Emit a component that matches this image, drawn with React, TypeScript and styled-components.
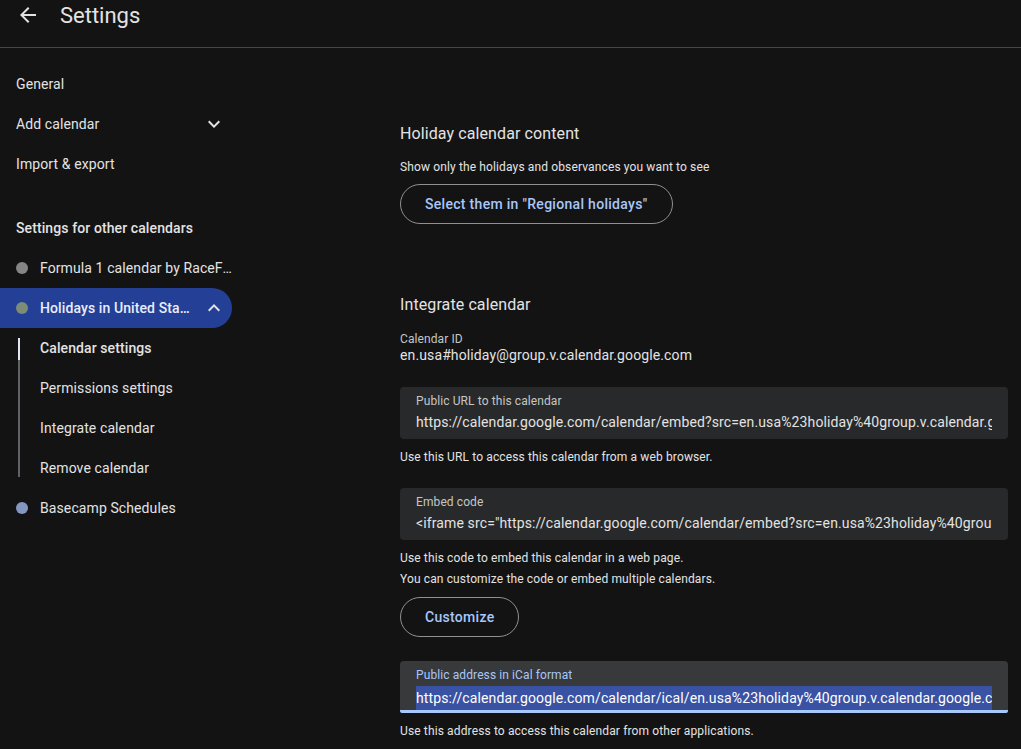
import React from 'react'
import styled, { createGlobalStyle } from 'styled-components'

const GlobalStyle = createGlobalStyle`
  body {
    margin: 0;
    background: #131314;
    font-family: Roboto, 'Noto Sans', Arial, sans-serif;
    color: #e3e3e3;
  }
`

const Page = styled.div`
  height: 100vh;
  overflow: hidden;
  display: flex;
  flex-direction: column;
`

const Header = styled.header`
  height: 48px;
  box-sizing: border-box;
  padding: 0 0 17px 16px;
  display: flex;
  align-items: center;
  gap: 20px;
  border-bottom: 1px solid #444746;
  flex-shrink: 0;
`

const Title = styled.h1`
  margin: 0;
  font-size: 22px;
  font-weight: 400;
  color: #e3e3e3;
`

const Body = styled.div`
  display: flex;
  flex: 1;
  min-height: 0;
`

const Sidebar = styled.nav`
  width: 256px;
  flex-shrink: 0;
  padding-top: 16px;
`

const Row = styled.div<{ $active?: boolean; $bold?: boolean }>`
  width: 232px;
  height: 40px;
  box-sizing: border-box;
  display: flex;
  align-items: center;
  padding: 0 ${p => (p.$active ? '6px' : '0')} 0 16px;
  gap: 8px;
  font-size: 14px;
  letter-spacing: 0.1px;
  font-weight: ${p => (p.$bold || p.$active ? 500 : 400)};
  color: ${p => (p.$active ? '#e8eefc' : '#e3e3e3')};
  background: ${p => (p.$active ? '#243f96' : 'transparent')};
  border-radius: 0 20px 20px 0;
`

const RowLabel = styled.span`
  flex: 1;
  min-width: 0;
  white-space: nowrap;
  overflow: hidden;
  text-overflow: ellipsis;
`

const SectionTitle = styled(Row)`
  margin-top: 24px;
  font-weight: 500;
`

const Dot = styled.span<{ $color: string }>`
  width: 12px;
  height: 12px;
  border-radius: 50%;
  background: ${p => p.$color};
  flex-shrink: 0;
  margin-right: 4px;
`

const SubList = styled.div`
  position: relative;
  &::before {
    content: '';
    position: absolute;
    left: 18px;
    top: 10px;
    bottom: 11px;
    width: 2px;
    background: #5f6368;
  }
`

const SubItem = styled.div<{ $active?: boolean }>`
  position: relative;
  height: 40px;
  display: flex;
  align-items: center;
  padding-left: 40px;
  font-size: 14px;
  letter-spacing: 0.1px;
  font-weight: ${p => (p.$active ? 500 : 400)};
  color: #e3e3e3;
  &::before {
    content: '';
    display: ${p => (p.$active ? 'block' : 'none')};
    position: absolute;
    left: 18px;
    top: 10px;
    height: 22px;
    width: 2px;
    background: #dfe6f5;
  }
`

const Main = styled.main`
  flex: 1;
  min-width: 0;
  padding: 74px 13px 0 144px;
`

const Section = styled.section`
  & + & {
    margin-top: 69px;
  }
`

const Heading = styled.h2`
  margin: 0;
  font-size: 16px;
  line-height: 24px;
  font-weight: 400;
  letter-spacing: 0.1px;
  color: #e3e3e3;
`

const Desc = styled.p`
  margin: 13px 0 0;
  font-size: 12px;
  line-height: 16px;
  letter-spacing: 0.13px;
  color: #e3e3e3;
`

const OutlineButton = styled.button<{ $top?: number }>`
  margin-top: ${p => p.$top ?? 9}px;
  height: 40px;
  padding: 0 24px;
  border: 1px solid #8e918f;
  border-radius: 20px;
  background: transparent;
  color: #a8c7fa;
  font-family: inherit;
  font-size: 14px;
  font-weight: 500;
  letter-spacing: 0.3px;
`

const IdLabel = styled.div`
  margin-top: 15px;
  font-size: 12px;
  line-height: 14px;
  letter-spacing: 0.1px;
  color: #c4c7c5;
`

const IdValue = styled.div`
  font-size: 14px;
  line-height: 18px;
  letter-spacing: 0.12px;
  color: #e3e3e3;
`

const Field = styled.div<{ $focused?: boolean; $top?: number }>`
  margin-top: ${p => p.$top ?? 23}px;
  box-sizing: border-box;
  height: 52px;
  padding: 6px 16px 0;
  overflow: hidden;
  background: ${p => (p.$focused ? '#37393b' : '#28292a')};
  border-radius: 4px 4px ${p => (p.$focused ? '2px 2px' : '4px 4px')};
  border-bottom: ${p => (p.$focused ? '3px solid #a8c7fa' : 'none')};
`

const FieldLabel = styled.div<{ $focused?: boolean }>`
  font-size: 12px;
  line-height: 16px;
  letter-spacing: 0.1px;
  color: ${p => (p.$focused ? '#a8c7fa' : '#c4c7c5')};
`

const FieldValue = styled.div`
  margin-top: 3px;
  font-size: 14px;
  line-height: 20px;
  letter-spacing: 0.12px;
  color: #e3e3e3;
  white-space: nowrap;
  overflow: hidden;
`

const Selected = styled.span`
  background: #3a52a3;
  color: #fff;
  display: inline-block;
  padding: 2px 0;
`

const Helper = styled.div<{ $gap?: number }>`
  margin-top: ${p => p.$gap ?? 10}px;
  font-size: 12px;
  line-height: 16px;
  letter-spacing: 0.13px;
  color: #e3e3e3;
`

const Icon = ({ d, size = 24 }: { d: string; size?: number }) => (
  <svg width={size} height={size} viewBox="0 0 24 24" fill="#e3e3e3" style={{ flexShrink: 0 }}>
    <path d={d} />
  </svg>
)

const ARROW_BACK = 'M20 11H7.83l5.59-5.59L12 4l-8 8 8 8 1.41-1.41L7.83 13H20v-2z'
const EXPAND_MORE = 'M16.59 8.59L12 13.17 7.41 8.59 6 10l6 6 6-6z'
const EXPAND_LESS = 'M12 8l-6 6 1.41 1.41L12 10.83l4.59 4.58L18 14z'

const App = () => {
  return (
    <Page>
      <GlobalStyle />
      <Header>
        <Icon d={ARROW_BACK} />
        <Title>Settings</Title>
      </Header>
      <Body>
        <Sidebar>
          <Row><RowLabel>General</RowLabel></Row>
          <Row style={{ paddingRight: 6 }}>
            <RowLabel>Add calendar</RowLabel>
            <Icon d={EXPAND_MORE} />
          </Row>
          <Row><RowLabel>Import &amp; export</RowLabel></Row>
          <SectionTitle as="div">Settings for other calendars</SectionTitle>
          <Row>
            <Dot $color="#858585" />
            <RowLabel>Formula 1 calendar by RaceFans</RowLabel>
          </Row>
          <Row $active>
            <Dot $color="#7c8c76" />
            <RowLabel>Holidays in United States</RowLabel>
            <Icon d={EXPAND_LESS} />
          </Row>
          <SubList>
            <SubItem $active>Calendar settings</SubItem>
            <SubItem>Permissions settings</SubItem>
            <SubItem>Integrate calendar</SubItem>
            <SubItem>Remove calendar</SubItem>
          </SubList>
          <Row>
            <Dot $color="#8497c2" />
            <RowLabel>Basecamp Schedules</RowLabel>
          </Row>
        </Sidebar>
        <Main>
          <Section>
            <Heading>Holiday calendar content</Heading>
            <Desc>Show only the holidays and observances you want to see</Desc>
            <OutlineButton>Select them in "Regional holidays"</OutlineButton>
          </Section>
          <Section>
            <Heading>Integrate calendar</Heading>
            <IdLabel>Calendar ID</IdLabel>
            <IdValue>en.usa#holiday@group.v.calendar.google.com</IdValue>

            <Field>
              <FieldLabel>Public URL to this calendar</FieldLabel>
              <FieldValue>https://calendar.google.com/calendar/embed?src=en.usa%23holiday%40group.v.calendar.google.com&amp;ctz=America%2FNew_York</FieldValue>
            </Field>
            <Helper>Use this URL to access this calendar from a web browser.</Helper>

            <Field>
              <FieldLabel>Embed code</FieldLabel>
              <FieldValue>&lt;iframe src="https://calendar.google.com/calendar/embed?src=en.usa%23holiday%40group.v.calendar.google.com&amp;ctz=America%2FNew_York" style="border: 0" width="800" height="600"&gt;&lt;/iframe&gt;</FieldValue>
            </Field>
            <Helper>Use this code to embed this calendar in a web page.</Helper>
            <Helper $gap={5}>You can customize the code or embed multiple calendars.</Helper>
            <OutlineButton $top={10}>Customize</OutlineButton>

            <Field $focused $top={24}>
              <FieldLabel $focused>Public address in iCal format</FieldLabel>
              <FieldValue>
                <Selected>https://calendar.google.com/calendar/ical/en.usa%23holiday%40group.v.calendar.google.com/public/basic.ics</Selected>
              </FieldValue>
            </Field>
            <Helper>Use this address to access this calendar from other applications.</Helper>
          </Section>
        </Main>
      </Body>
    </Page>
  )
}

export default App
